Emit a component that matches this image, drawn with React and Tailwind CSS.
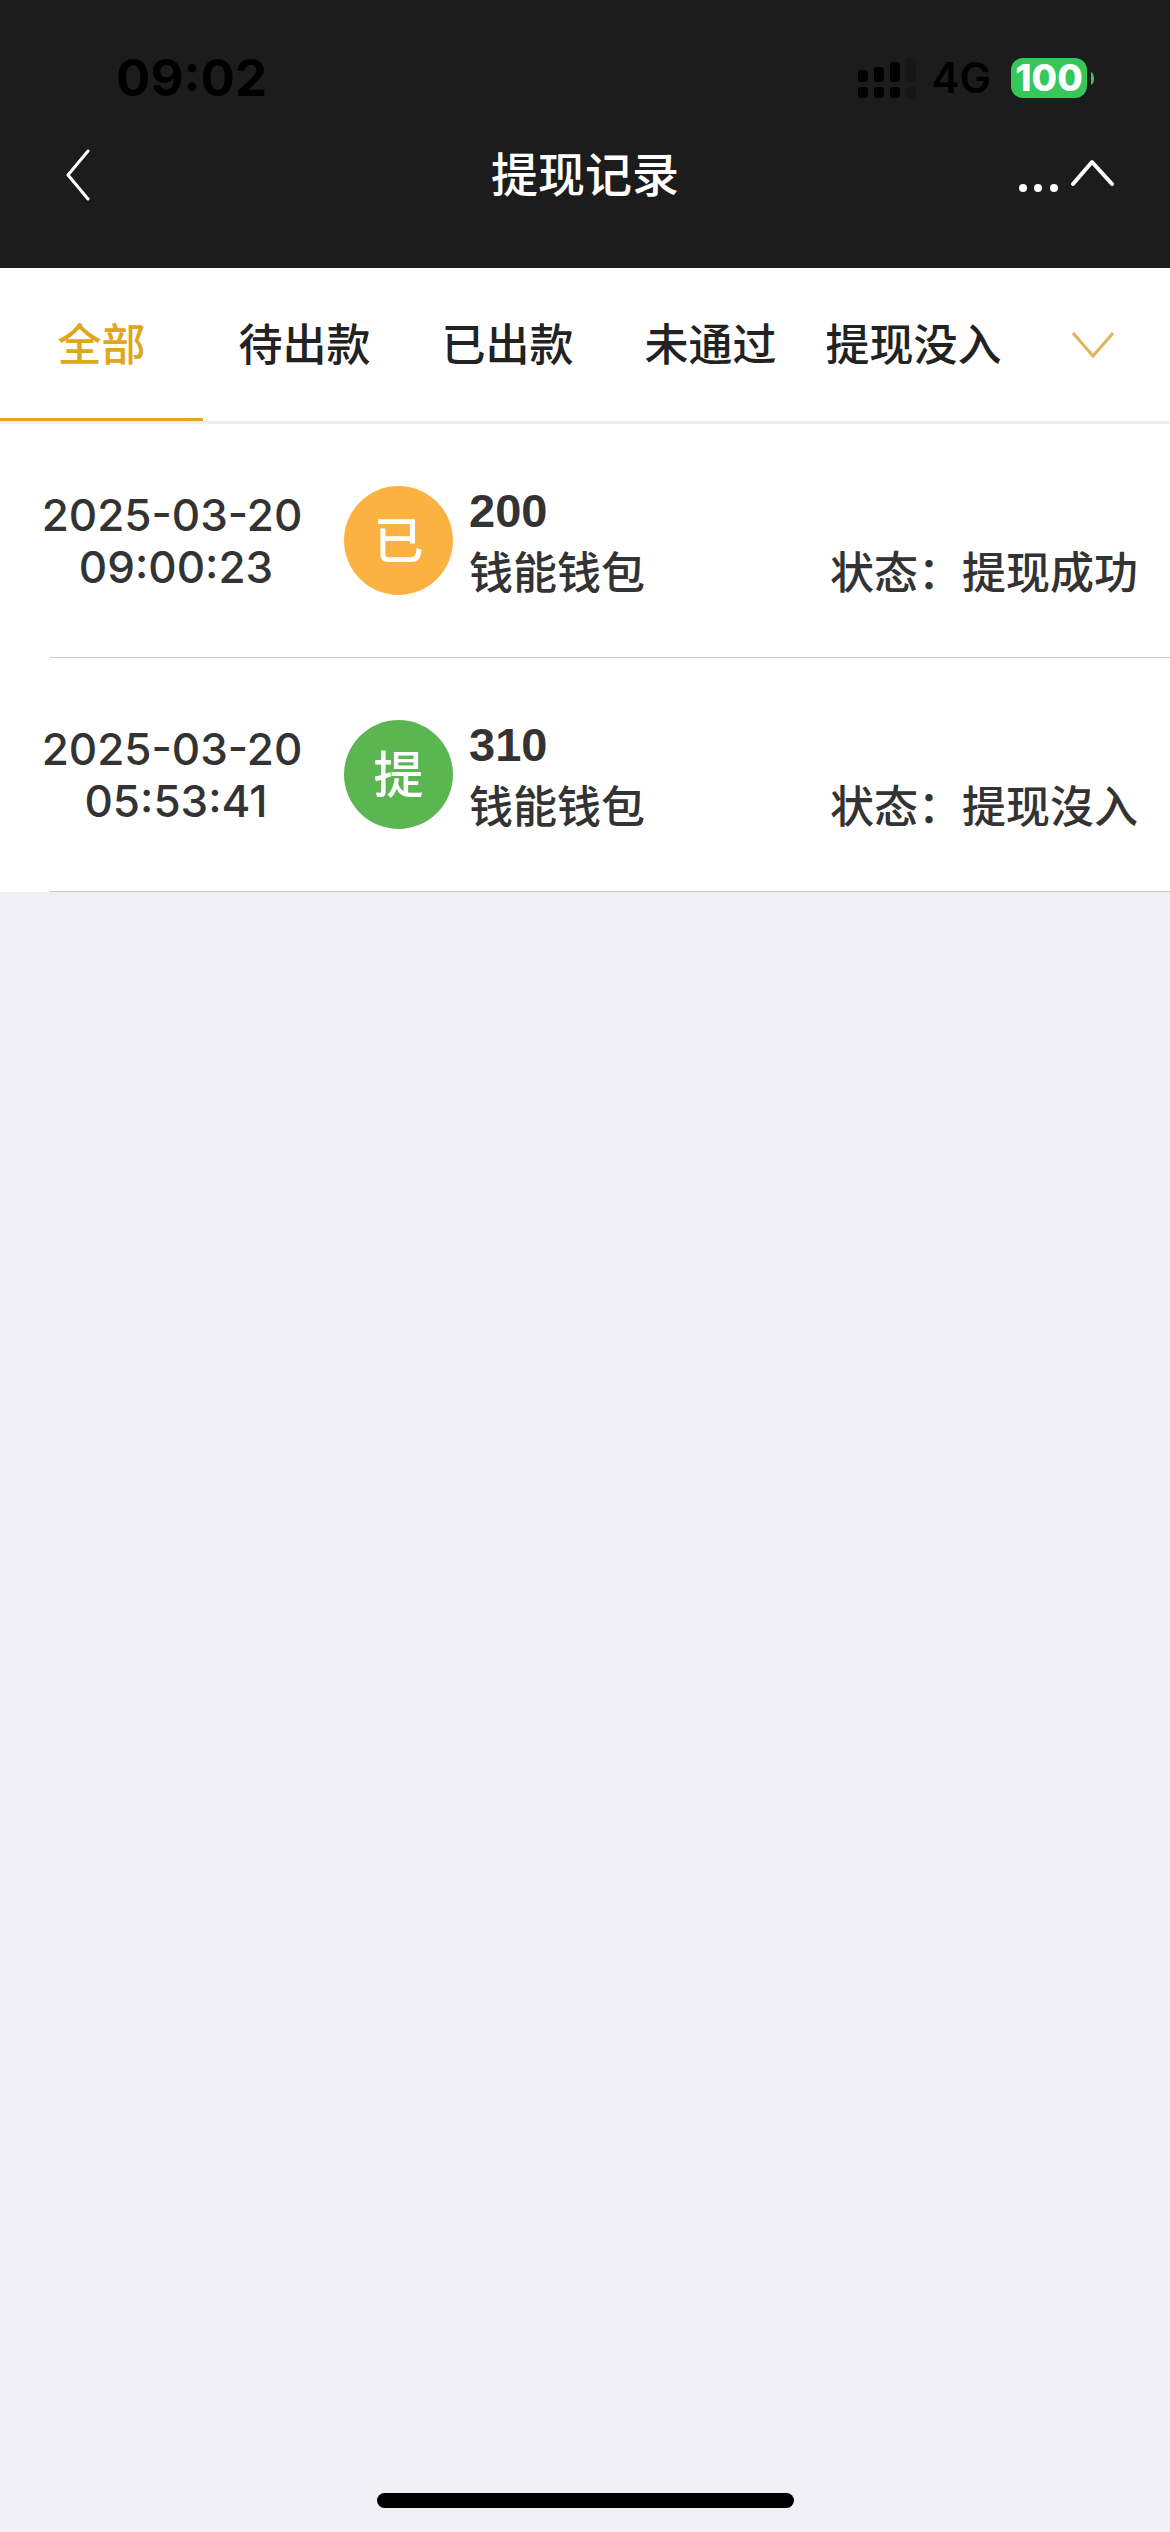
import React, { useState } from 'react';

const TABS = ['全部', '待出款', '已出款', '未通过', '提现没入'];

const RECORDS = [
  {
    id: 1,
    date: '2025-03-20',
    time: '09:00:23',
    badge: '已',
    badgeColor: 'bg-[#fcb241]',
    amount: 200,
    wallet: '钱能钱包',
    status: '提现成功',
  },
  {
    id: 2,
    date: '2025-03-20',
    time: '05:53:41',
    badge: '提',
    badgeColor: 'bg-[#5bb652]',
    amount: 310,
    wallet: '钱能钱包',
    status: '提现沒入',
  },
];

const SignalIcon = () => (
  <svg width="58" height="42" viewBox="0 0 58 42" className="text-black">
    <g fill="currentColor">
      <rect x="0" y="13" width="10" height="12" rx="3" />
      <rect x="16" y="10" width="10" height="15" rx="3" />
      <rect x="32" y="5" width="10" height="20" rx="3" />
      <rect x="0" y="30" width="10" height="11" rx="3" />
      <rect x="16" y="30" width="10" height="11" rx="3" />
      <rect x="32" y="30" width="10" height="11" rx="3" />
    </g>
    <g fill="#161616">
      <rect x="48" y="0" width="10" height="25" rx="3" />
      <rect x="48" y="30" width="10" height="11" rx="3" />
    </g>
  </svg>
);

const StatusBar = () => (
  <div className="flex items-center justify-between pt-14 pl-28 pr-19 h-25">
    <span className="pl-1 text-[51px] leading-11 font-bold text-black">09:02</span>
    <div className="flex items-center">
      <SignalIcon />
      <span className="ml-4 text-[42px] leading-11 font-semibold text-black">4G</span>
      <div className="ml-5 flex items-center gap-1">
        <span className="w-19 h-10 rounded-xl bg-[#34c759] text-center text-[37px] leading-10 font-extrabold text-white">
          100
        </span>
        <svg width="3" height="13" viewBox="0 0 3 13">
          <path d="M0 0C4 2 4 11 0 13Z" fill="#34c759" />
        </svg>
      </div>
    </div>
  </div>
);

const NavBar = () => (
  <div className="flex items-center justify-between h-[150px] px-14">
    <button type="button" aria-label="返回" className="flex items-center w-34 h-20 pl-2">
      <svg width="26" height="54" viewBox="0 0 26 54" fill="none" stroke="white" strokeWidth="3" strokeLinecap="round" strokeLinejoin="round">
        <path d="M24 3L4 27L24 51" />
      </svg>
    </button>
    <h1 className="text-[47px] font-medium text-white">提现记录</h1>
    <button type="button" aria-label="更多" className="flex justify-end w-34 h-20 items-center">
      <svg width="98" height="40" viewBox="0 0 98 40" fill="none">
        <g fill="white">
          <circle cx="7" cy="33" r="4" />
          <circle cx="22" cy="33" r="4" />
          <circle cx="38" cy="33" r="4" />
        </g>
        <path d="M57 29L76 7L96 29" stroke="white" strokeWidth="4" strokeLinecap="round" strokeLinejoin="round" />
      </svg>
    </button>
  </div>
);

const RecordItem = ({ record }) => (
  <li className="bg-white">
    <div className="flex items-center h-[233px] pl-10 pr-8">
      <div className="w-66 text-center text-[44px] leading-13 font-medium">
        <div>{record.date}</div>
        <div className="pl-2">{record.time}</div>
      </div>
      <span
        className={`ml-10 flex items-center justify-center size-[109px] shrink-0 rounded-full text-[50px] leading-none font-medium text-white ${record.badgeColor}`}
      >
        {record.badge}
      </span>
      <div className="ml-4 pt-3 grow">
        <div className="font-['Liberation_Sans'] text-[47px] leading-13 font-bold">{record.amount}</div>
        <div className="flex justify-between text-[44px] leading-18 font-medium">
          <span>{record.wallet}</span>
          <span>状态：{record.status}</span>
        </div>
      </div>
    </div>
    <div className="ml-[50px] h-px bg-[#c8c7cc]"></div>
  </li>
);

const App = () => {
  const [activeTab, setActiveTab] = useState(0);

  return (
    <div className="flex flex-col min-h-screen bg-[#f1f0f6] text-[#333333] font-[Inter,'Noto_Sans_CJK_SC',sans-serif]">
      {/* Header */}
      <header className="bg-[#1c1c1c] h-67">
        <StatusBar />
        <NavBar />
      </header>

      {/* Tabs */}
      <nav className="flex bg-white border-b-3 border-[#eeeeee] h-39">
        {TABS.map((tab, index) => (
          <button
            key={tab}
            type="button"
            onClick={() => setActiveTab(index)}
            className={`flex-1 pt-1 border-b-3 text-[44px] font-medium whitespace-nowrap ${
              activeTab === index ? 'border-[#dfa620] text-[#dfa620]' : 'border-transparent text-[#222222]'
            }`}
          >
            {tab}
          </button>
        ))}
        <button type="button" aria-label="展开" className="flex items-center justify-center w-[155px]">
          <svg width="42" height="26" viewBox="0 0 42 26" fill="none" stroke="#dfb55a" strokeWidth="3">
            <path d="M1 1L21 24L41 1" />
          </svg>
        </button>
      </nav>

      {/* Records */}
      <ul>
        {RECORDS.map((record) => (
          <RecordItem key={record.id} record={record} />
        ))}
      </ul>

      {/* Home indicator */}
      <div className="mt-auto mx-auto mb-6 w-[417px] h-[15px] rounded-full bg-black"></div>
    </div>
  );
};

export default App;
